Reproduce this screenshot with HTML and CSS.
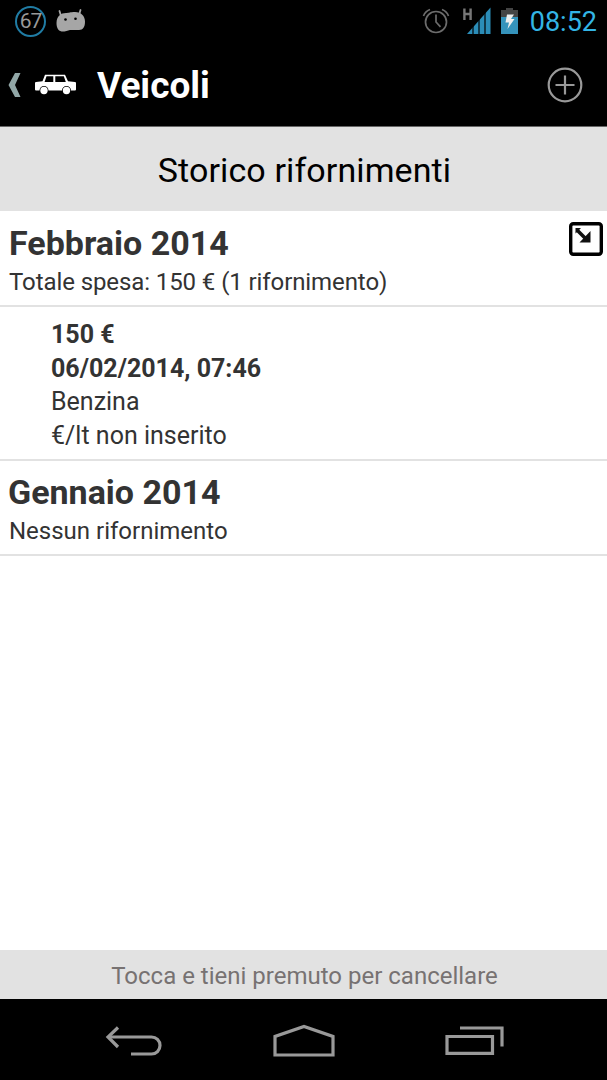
FILE: index.html
```html
<!DOCTYPE html>
<html lang="it">
<head>
    <meta charset="UTF-8">
    <meta name="viewport" content="width=device-width, initial-scale=1.0">
    <title>Veicoli</title>
    <link rel="stylesheet" href="styles.css">
</head>
<body>
    <!-- Status bar -->
    <div class="status-bar">
        <div class="notifications">
            <span class="battery-level">67</span>
            <svg class="robot" width="30" height="24" viewBox="0 0 30 24">
                <path d="M5 7 L3.5 2 M23 6 L24.500 1" stroke="#a6a6a6" stroke-width="1.8" stroke-linecap="round"/>
                <path d="M0.500 14 C0.500 7 5 4 10 4 C13 4 14 3 19 3 C25 3 29 7 29 12.500 C29 18 27 21 23 21 L15 21 C12 21 11 22.500 7 22.500 C3 22.500 0.500 20 0.500 14 Z" fill="#a6a6a6"/>
                <circle cx="9.500" cy="10.500" r="1.300" fill="#000"/>
                <circle cx="19.500" cy="9.800" r="1.300" fill="#000"/>
            </svg>
        </div>
        <div class="system">
            <svg class="alarm" width="28" height="28" viewBox="0 0 28 28" fill="none" stroke="#6c6c6c" stroke-width="1.700">
                <circle cx="14" cy="15" r="10.500"/>
                <path d="M14 7.500 V15 L18.500 19.800"/>
                <path d="M1.500 9 Q3 4.500 8 2.500 M26.500 9 Q25 4.500 20 2.500"/>
            </svg>
            <svg class="signal" width="29" height="28" viewBox="0 0 29 28">
                <path d="M2.400 1.500 V13 M8.600 1.500 V13 M2.400 7 H8.600" stroke="#777" stroke-width="2.400" fill="none"/>
                <path d="M5 27 L28.500 0.500 V27 Z" fill="#2b8db8"/>
                <path d="M11 0 V28 M17 0 V28 M23 0 V28" stroke="#000" stroke-width="1.200"/>
            </svg>
            <svg class="battery" width="17" height="28" viewBox="0 0 17 28">
                <path d="M0 3 H5 V1 H12 V3 H17 V10 H0 Z" fill="#444"/>
                <path d="M0 10 H17 V27 H0 Z" fill="#3593bb"/>
                <path d="M6 7.500 L13 7.500 L10 12 H13.500 L6.500 22 L8 15.500 H4.500 Z" fill="#eee"/>
            </svg>
            <span class="clock">08:52</span>
        </div>
    </div>

    <!-- Action bar -->
    <div class="action-bar">
        <svg class="up" width="13" height="24" viewBox="0 0 13 24">
            <path d="M7 0 H12.500 L7 12 L12.500 24 H7 L0.500 12 Z" fill="#92a7a7"/>
        </svg>
        <svg class="car" width="41" height="22" viewBox="0 0 41 22">
            <path d="M0 9 Q0 8 1 8 L7.500 7.300 L10 0.700 H30 L33 7.300 L40 8 Q41 8 41 9 V15.500 Q41 16.500 40 16.500 H36 A4.500 4.500 0 0 0 27 16.500 H13.500 A4.500 4.500 0 0 0 4.500 16.500 H1 Q0 16.500 0 15.500 Z" fill="#fff"/>
            <path d="M9.600 8 L11.500 2.200 H18.300 V8 Z M20.300 8 V2.200 H28.800 L30.800 8 Z" fill="#000"/>
            <circle cx="9" cy="16.500" r="3.700" fill="#fff"/>
            <circle cx="31.500" cy="16.500" r="3.700" fill="#fff"/>
        </svg>
        <h1>Veicoli</h1>
        <svg class="add" width="36" height="36" viewBox="0 0 36 36" fill="none" stroke="#999" stroke-width="2.200">
            <circle cx="18" cy="18" r="16.300"/>
            <path d="M18 8.500 V27.500 M8.500 18 H27.500"/>
        </svg>
    </div>

    <!-- Refuelling history -->
    <div class="title">Storico rifornimenti</div>
    <div class="history">
        <div class="month">
            <div>
                <h2>Febbraio 2014</h2>
                <p class="total">Totale spesa: 150 € (1 rifornimento)</p>
            </div>
            <svg class="collapse" width="34" height="34" viewBox="0 0 34 34">
                <rect x="1.700" y="1.700" width="30.600" height="30.600" rx="2.500" fill="#fff" stroke="#000" stroke-width="3.400"/>
                <path d="M8 8 L17 17" stroke="#111" stroke-width="3.600"/>
                <path d="M21.500 9 V20.500 H10.500 Z M6.500 6 H12 L6.500 11.500 Z" fill="#111"/>
            </svg>
        </div>
        <div class="refuel">
            <p class="strong">150 €</p>
            <p class="strong">06/02/2014, 07:46</p>
            <p>Benzina</p>
            <p>€/lt non inserito</p>
        </div>
        <div class="month empty">
            <div>
                <h2>Gennaio 2014</h2>
                <p>Nessun rifornimento</p>
            </div>
        </div>
    </div>
    <div class="hint">Tocca e tieni premuto per cancellare</div>

    <!-- Navigation bar -->
    <div class="nav-bar">
        <svg width="58" height="32" viewBox="0 0 58 32" fill="none" stroke="#999" stroke-width="3.200">
            <path d="M3 13 H46.500 A8.500 8.500 0 0 1 46.500 30 H26"/>
            <path d="M13 3.500 L3 13 L13 23"/>
        </svg>
        <svg width="62" height="33" viewBox="0 0 62 33" fill="none" stroke="#999" stroke-width="3.200">
            <path d="M2 31 V12.500 L31 2.500 L60 12.500 V31 Z"/>
        </svg>
        <svg width="60" height="30" viewBox="0 0 60 30" fill="none" stroke="#999" stroke-width="3.200">
            <path d="M2 11.500 H47.500 V28.400 H2 Z M15 3 H57 V21.500"/>
        </svg>
    </div>
</body>
</html>
```

FILE: styles.css
```css
* {
    margin: 0;
    padding: 0;
    box-sizing: border-box;
}

body {
    height: 1080px;
    display: flex;
    flex-direction: column;
    background-color: #fff;
    color: #333;
    font-family: Roboto, sans-serif;
    overflow: hidden;
}

svg {
    display: block;
    flex: none;
}

.status-bar {
    height: 42px;
    display: flex;
    justify-content: space-between;
    padding: 0 10px 0 15px;
    background-color: #000;
}

.notifications,
.system {
    display: flex;
    align-items: center;
}

.battery-level {
    width: 31px;
    height: 31px;
    margin-right: 10px;
    border: 2px solid #207ca4;
    border-radius: 50%;
    color: #999;
    font-size: 21px;
    line-height: 27px;
    letter-spacing: -1px;
    text-align: center;
}

.signal {
    margin-left: 12px;
}

.battery {
    margin-left: 10px;
}

.clock {
    margin-left: 12px;
    padding-top: 2px;
    color: #33b5e5;
    font-size: 27px;
}

.action-bar {
    height: 84px;
    display: flex;
    align-items: center;
    padding: 2px 24px 0 8px;
    background-color: #000;
}

.car {
    margin-left: 14px;
}

h1 {
    flex: 1;
    margin-left: 21px;
    padding-top: 2px;
    color: #fff;
    font-size: 37px;
    line-height: 44px;
    font-weight: bold;
}

.title {
    height: 85px;
    padding: 2px 0 0 2px;
    background-color: #e2e2e2;
    border-top: 1px solid #666;
    color: #000;
    font-size: 34px;
    line-height: 82px;
    letter-spacing: 0.100px;
    text-align: center;
}

.history {
    flex: 1;
}

.month {
    height: 96px;
    display: flex;
    justify-content: space-between;
    padding: 11px 4px 0 9px;
    border-bottom: 2px solid #e2e2e2;
}

.month.empty {
    height: 95px;
    padding: 10px 4px 0 8px;
}

h2 {
    font-size: 34px;
    line-height: 43px;
    font-weight: bold;
}

.month p {
    font-size: 24px;
    line-height: 34px;
}

.month.empty p {
    padding-left: 1px;
}

.month .total {
    letter-spacing: -0.090px;
}

.refuel {
    height: 154px;
    padding: 11px 0 0 51px;
    border-bottom: 2px solid #e2e2e2;
    font-size: 25px;
    line-height: 33.700px;
}

.strong {
    font-weight: bold;
}

.hint {
    height: 49px;
    padding-left: 2px;
    background-color: #e2e2e2;
    color: #777272;
    font-size: 24px;
    line-height: 52px;
    text-align: center;
}

.nav-bar {
    height: 81px;
    display: flex;
    justify-content: space-between;
    align-items: center;
    padding: 1px 102px 0 105px;
    background-color: #000;
}
```
